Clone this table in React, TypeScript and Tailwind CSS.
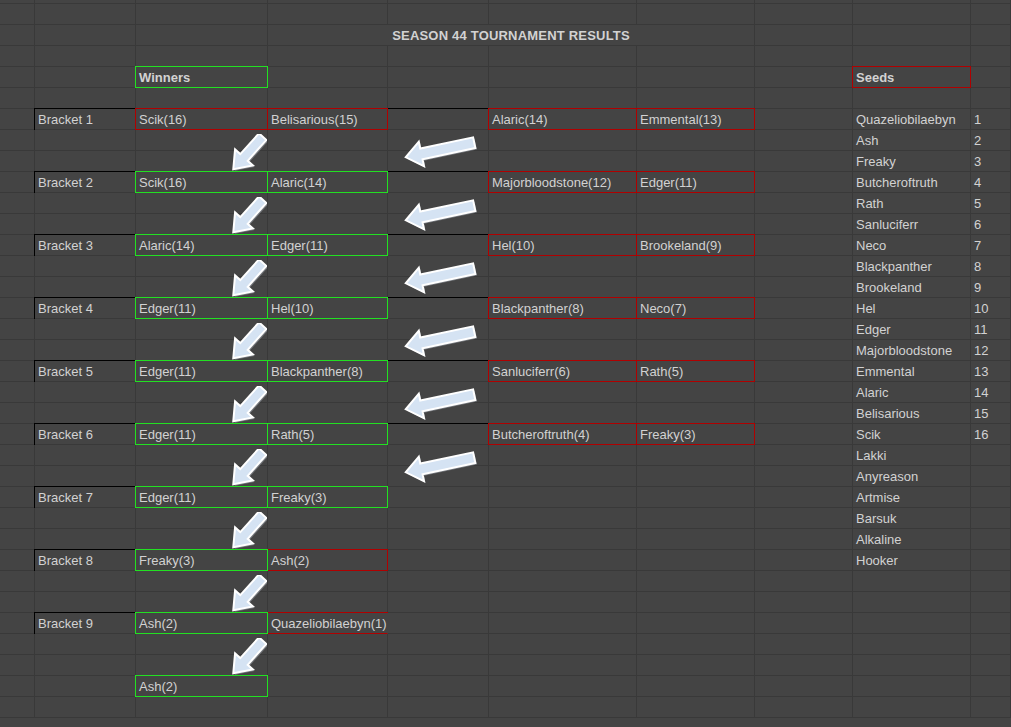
import React from 'react';

const WIDTHS = [
  'w-[35px]',
  'w-[101px]',
  'w-[132px]',
  'w-[120px]',
  'w-[101px]',
  'w-[148px]',
  'w-[118px]',
  'w-[98px]',
  'w-[118px]',
  'flex-1',
];

type Tone = 'plain' | 'win' | 'lose' | 'label' | 'black' | 'open';
type Cell = { text?: string; bold?: boolean; tone?: Tone };

const TONE: Record<Tone, string> = {
  plain: 'border-[#393939]',
  win: 'relative z-20 border-[#22e022] shadow-[0_-1px_0_0_#22e022,-1px_0_0_0_#22e022,-1px_-1px_0_0_#22e022]',
  lose: 'relative z-10 border-[#b00000] shadow-[0_-1px_0_0_#b00000,-1px_0_0_0_#b00000,-1px_-1px_0_0_#b00000]',
  label: 'relative z-10 border-[#393939] shadow-[0_-1px_0_0_#000,-1px_0_0_0_#000,-1px_-1px_0_0_#000]',
  black: 'relative z-10 border-[#393939] shadow-[0_-1px_0_0_#000]',
  open: 'relative z-10 border-r-[#444444] border-b-[#b00000] shadow-[0_-1px_0_0_#b00000]',
};

// [winner side a, winner side b, loser side a, loser side b]
const BRACKETS: [string, string, string?, string?][] = [
  ['Scik(16)', 'Belisarious(15)', 'Alaric(14)', 'Emmental(13)'],
  ['Scik(16)', 'Alaric(14)', 'Majorbloodstone(12)', 'Edger(11)'],
  ['Alaric(14)', 'Edger(11)', 'Hel(10)', 'Brookeland(9)'],
  ['Edger(11)', 'Hel(10)', 'Blackpanther(8)', 'Neco(7)'],
  ['Edger(11)', 'Blackpanther(8)', 'Sanluciferr(6)', 'Rath(5)'],
  ['Edger(11)', 'Rath(5)', 'Butcheroftruth(4)', 'Freaky(3)'],
  ['Edger(11)', 'Freaky(3)'],
  ['Freaky(3)', 'Ash(2)'],
  ['Ash(2)', 'Quazeliobilaebyn(1)'],
];

const SEEDS = [
  'Quazeliobilaebyn', 'Ash', 'Freaky', 'Butcheroftruth', 'Rath', 'Sanluciferr', 'Neco',
  'Blackpanther', 'Brookeland', 'Hel', 'Edger', 'Majorbloodstone', 'Emmental', 'Alaric',
  'Belisarious', 'Scik', 'Lakki', 'Anyreason', 'Artmise', 'Barsuk', 'Alkaline', 'Hooker',
];

const ROWS = 35;

const buildGrid = () => {
  const grid: Cell[][] = Array.from({ length: ROWS }, () => Array.from({ length: 10 }, () => ({})));
  grid[4][2] = { text: 'Winners', bold: true, tone: 'win' };
  grid[4][8] = { text: 'Seeds', bold: true, tone: 'lose' };

  BRACKETS.forEach(([a, b, c, d], i) => {
    const r = 6 + 3 * i;
    grid[r][1] = { text: `Bracket ${i + 1}`, tone: 'label' };
    if (i === 0) {
      grid[r][2] = { text: a, tone: 'lose' };
      grid[r][3] = { text: b, tone: 'lose' };
    } else if (i === 7) {
      grid[r][2] = { text: a, tone: 'win' };
      grid[r][3] = { text: b, tone: 'lose' };
    } else if (i === 8) {
      grid[r][2] = { text: a, tone: 'win' };
      grid[r][3] = { text: b, tone: 'open' };
    } else {
      grid[r][2] = { text: a, tone: 'win' };
      grid[r][3] = { text: b, tone: 'win' };
    }
    if (i < 6) grid[r][4] = { tone: 'black' };
    if (c) grid[r][5] = { text: c, tone: 'lose' };
    if (d) grid[r][6] = { text: d, tone: 'lose' };
  });
  grid[33][2] = { text: 'Ash(2)', tone: 'win' };

  SEEDS.forEach((name, i) => {
    grid[6 + i][8] = { text: name };
    if (i < 16) grid[6 + i][9] = { text: String(i + 1) };
  });
  return grid;
};

const GridCell: React.FC<{ cell: Cell; width: string }> = ({ cell, width }) => (
  <div
    className={`${width} shrink-0 h-full border-r border-b ${TONE[cell.tone ?? 'plain']} flex items-center px-[3px] whitespace-nowrap text-[13px] leading-none ${
      cell.bold ? 'font-bold' : ''
    }`}
  >
    {cell.text}
  </div>
);

const DiagonalArrow: React.FC<{ top: string }> = ({ top }) => {
  const pts = '-22,-5 6,-5 6,-12 22,0 6,12 6,5 -22,5';
  return (
    <svg width="38" height="38" viewBox="0 0 38 38" className={`absolute left-[229px] ${top} z-30`}>
      <g transform="translate(20.5 20.5) rotate(132)">
        <polygon points={pts} fill="#8a8f96" opacity="0.7" />
      </g>
      <g transform="translate(19 19) rotate(132)">
        <polygon points={pts} fill="#d5e3f3" stroke="#ffffff" strokeWidth="2" strokeLinejoin="miter" />
      </g>
    </svg>
  );
};

const LeftArrow: React.FC<{ top: string }> = ({ top }) => {
  const pts = '-35,-5.5 19,-5.5 19,-12.5 35,0 19,12.5 19,5.5 -35,5.5';
  return (
    <svg width="80" height="40" viewBox="0 0 80 40" className={`absolute left-[400px] ${top} z-30`}>
      <g transform="translate(41.5 21.5) rotate(168)">
        <polygon points={pts} fill="#8a8f96" opacity="0.7" />
      </g>
      <g transform="translate(40 20) rotate(168)">
        <polygon points={pts} fill="#d5e3f3" stroke="#ffffff" strokeWidth="2" strokeLinejoin="miter" />
      </g>
    </svg>
  );
};

const DIAG_TOPS = [
  'top-[134px]', 'top-[197px]', 'top-[260px]', 'top-[323px]', 'top-[386px]',
  'top-[449px]', 'top-[512px]', 'top-[575px]', 'top-[638px]',
];
const LEFT_TOPS = ['top-[130px]', 'top-[193px]', 'top-[256px]', 'top-[319px]', 'top-[382px]', 'top-[445px]'];

export default function App() {
  const grid = buildGrid();

  return (
    <div className="relative w-[1011px] h-[727px] overflow-hidden bg-[#444444] text-[#d2d2d2] font-['Liberation_Sans',Arial,sans-serif]">
      {grid.map((row, r) => {
        if (r === 2) {
          return (
            <div key={r} className="flex h-[21px]">
              <GridCell cell={row[0]} width={WIDTHS[0]} />
              <GridCell cell={row[1]} width={WIDTHS[1]} />
              <GridCell cell={row[2]} width={WIDTHS[2]} />
              <div className="w-[487px] shrink-0 h-full border-r border-b border-[#393939] flex items-center justify-center text-[13px] leading-none font-bold tracking-[0.2px] whitespace-nowrap">
                SEASON 44 TOURNAMENT RESULTS
              </div>
              <GridCell cell={row[7]} width={WIDTHS[7]} />
              <GridCell cell={row[8]} width={WIDTHS[8]} />
              <GridCell cell={row[9]} width={WIDTHS[9]} />
            </div>
          );
        }
        return (
          <div key={r} className={`flex ${r === 0 ? 'h-[4px]' : 'h-[21px]'}`}>
            {row.map((cell, c) => (
              <GridCell key={c} cell={cell} width={WIDTHS[c]} />
            ))}
          </div>
        );
      })}

      {/* Progression arrows */}
      {DIAG_TOPS.map((t) => (
        <DiagonalArrow key={t} top={t} />
      ))}
      {LEFT_TOPS.map((t) => (
        <LeftArrow key={t} top={t} />
      ))}
    </div>
  );
}
